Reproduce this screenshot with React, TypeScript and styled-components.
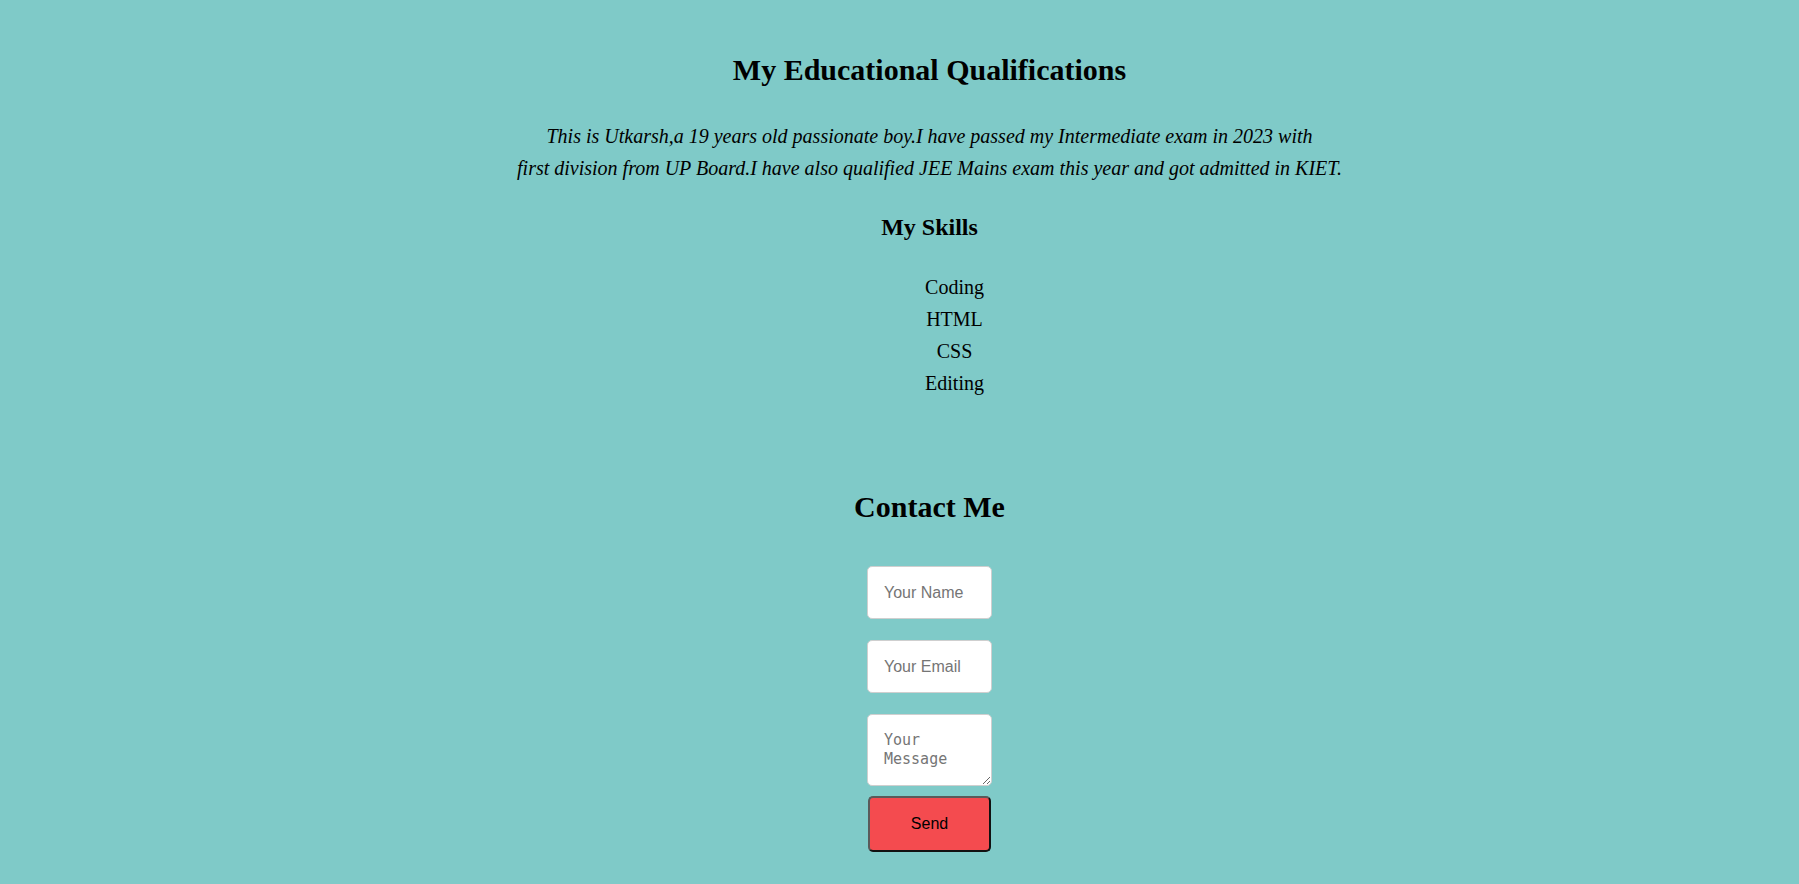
import React from "react";
import styled, { createGlobalStyle } from "styled-components";

const GlobalStyle = createGlobalStyle`
  html, body {
    margin: 0;
    padding: 0;
    background: #7fcac8;
  }
  body {
    font-family: "Liberation Serif", "Times New Roman", serif;
    color: #000;
  }
`;

const Page = styled.main`
  min-height: 884px;
  box-sizing: border-box;
  padding: 52px 0 0 60px;
  display: flex;
  flex-direction: column;
  align-items: center;
  background: #7fcac8;
`;

const Section = styled.section`
  display: flex;
  flex-direction: column;
  align-items: center;
  width: 100%;
`;

const Title = styled.h1<{ $top?: number }>`
  margin: ${(p) => p.$top ?? 0}px 0 0;
  font-family: "Liberation Serif", "Times New Roman", serif;
  font-size: 30px;
  font-weight: bold;
  line-height: 36px;
  text-align: center;
`;

const Intro = styled.p`
  margin: 32px 0 0;
  font-size: 20px;
  font-style: italic;
  line-height: 32px;
  text-align: center;
`;

const SubTitle = styled.h3`
  margin: 29px 0 0;
  font-size: 24px;
  font-weight: bold;
  line-height: 28px;
  text-align: center;
`;

const SkillList = styled.ul`
  margin: 30px 0 0;
  padding: 0 0 0 50px;
  list-style: none;
  text-align: center;
`;

const Skill = styled.li`
  font-size: 20px;
  line-height: 32px;
`;

const Form = styled.form`
  margin-top: 41px;
  display: flex;
  flex-direction: column;
  align-items: center;
`;

const fieldBase = `
  box-sizing: border-box;
  width: 125px;
  padding: 0 16px;
  border: 1px solid #cfcfcf;
  border-radius: 5px;
  background: #fff;
  color: #000;
  outline: none;
`;

const TextField = styled.input`
  ${fieldBase}
  height: 53px;
  margin-bottom: 21px;
  font-family: "Liberation Sans", Arial, sans-serif;
  font-size: 16px;
  &::placeholder {
    color: #757575;
  }
`;

const MessageField = styled.textarea`
  ${fieldBase}
  height: 72px;
  padding-top: 16px;
  padding-bottom: 16px;
  margin-bottom: 10px;
  font-family: "DejaVu Sans Mono", "Liberation Mono", monospace;
  font-size: 15px;
  line-height: 19px;
  resize: both;
  &::placeholder {
    color: #757575;
  }
`;

const SendButton = styled.button`
  box-sizing: border-box;
  width: 123px;
  height: 56px;
  border: 2px solid;
  border-color: #5a5a5a #111 #111 #5a5a5a;
  border-radius: 5px;
  background: #f44b4f;
  color: #000;
  font-family: "Liberation Sans", Arial, sans-serif;
  font-size: 16px;
  cursor: pointer;
`;

const skills = ["Coding", "HTML", "CSS", "Editing"];

export default function App() {
  return (
    <>
      <GlobalStyle />
      <Page>
        <Section>
          <Title>My Educational Qualifications</Title>
          <Intro>
            This is Utkarsh,a 19 years old passionate boy.I have passed my Intermediate exam in 2023 with
            <br />
            first division from UP Board.I have also qualified JEE Mains exam this year and got admitted in KIET.
          </Intro>
          <SubTitle>My Skills</SubTitle>
          <SkillList>
            {skills.map((s) => (
              <Skill key={s}>{s}</Skill>
            ))}
          </SkillList>
        </Section>
        <Section>
          <Title as="h2" $top={90}>
            Contact Me
          </Title>
          <Form onSubmit={(e) => e.preventDefault()}>
            <TextField type="text" placeholder="Your Name" />
            <TextField type="email" placeholder="Your Email" />
            <MessageField placeholder="Your Message" />
            <SendButton type="submit">Send</SendButton>
          </Form>
        </Section>
      </Page>
    </>
  );
}
